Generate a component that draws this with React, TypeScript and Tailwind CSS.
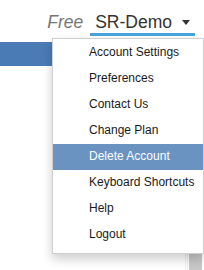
const items = [
  "Account Settings",
  "Preferences",
  "Contact Us",
  "Change Plan",
  "Delete Account",
  "Keyboard Shortcuts",
  "Help",
  "Logout",
];

export default function App() {
  const active = "Delete Account";

  return (
    <div className="relative h-[270px] w-[204px] overflow-hidden bg-white font-['Liberation_Sans',Arial,sans-serif]">
      {/* top bar */}
      <div className="flex h-[38px] items-start justify-end">
        <span className="mt-[12px] text-[17.5px] italic leading-[20px] text-[#777]">Free</span>
        <div className="ml-[7px] mr-[9px] flex h-[36px] flex-col">
          <div className="mt-[12px] flex items-center px-[5px] text-[17.5px] leading-[20px] text-[#333]">
            SR-Demo
            <span className="ml-[10px] mt-[1px] h-0 w-0 border-x-[4px] border-t-[5px] border-x-transparent border-t-[#333]" />
          </div>
          <div className="mt-auto h-[3px] w-full bg-[#4aa3df]" />
        </div>
      </div>

      {/* page content behind the menu */}
      <div className="mt-[4px] h-[24px] w-full bg-[#4b7bb4]" />
      <div className="mt-[182px] flex justify-end pr-[2px]">
        <div className="mr-[1px] h-[22px] w-px bg-[#eee]" />
        <div className="mr-[1px] h-[22px] w-px bg-[#eee]" />
        <div className="h-[22px] w-[13px] bg-[#c8c8c8]" />
      </div>

      {/* dropdown */}
      <ul className="absolute left-[52px] top-[38px] w-[152px] border border-[#cfcfcf] bg-white pb-[5px] pt-[1px] shadow-[0_5px_10px_rgba(0,0,0,0.2)]">
        {items.map((item) => (
          <li
            key={item}
            className={
              item === active
                ? "h-[26px] bg-[#6a93c2] pl-[36px] text-[12px] leading-[24px] text-white"
                : "h-[26px] pl-[36px] text-[12px] leading-[24px] text-[#1a1a1a]"
            }
          >
            {item}
          </li>
        ))}
      </ul>
    </div>
  );
}
